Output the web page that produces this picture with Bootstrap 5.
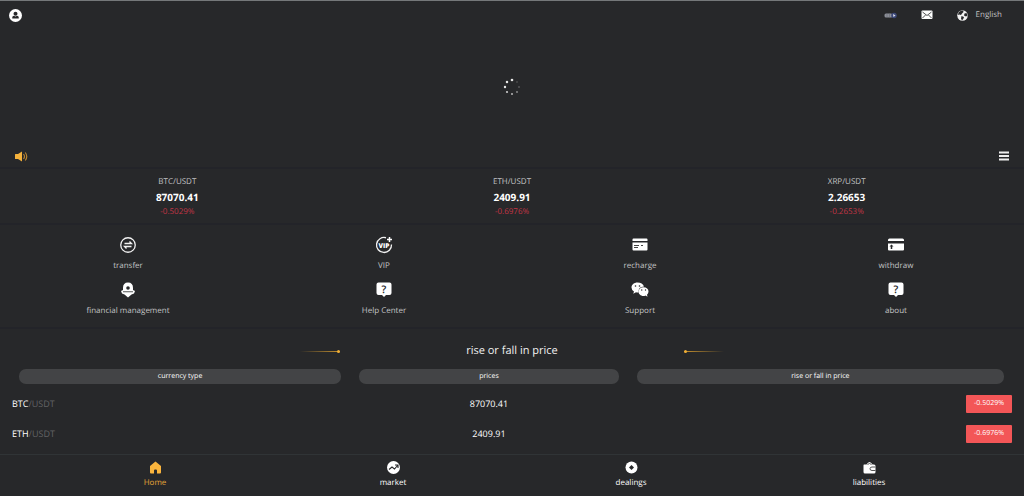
<!DOCTYPE html>
<html lang="en">
<head>
<meta charset="utf-8">
<meta name="viewport" content="width=device-width, initial-scale=1">
<title>Home</title>
<link href="https://cdn.jsdelivr.net/npm/bootstrap@5.3.0/dist/css/bootstrap.min.css" rel="stylesheet">
<style>
  body { background: #27282a; color: #c2c3c4; font-family: "Open Sans", "Noto Sans", sans-serif; font-size: 8px; line-height: 12px; text-rendering: geometricPrecision; }
  a, a:hover { color: inherit; text-decoration: none; }
  button { color: #fff; }
  svg { display: block; }
  .topbar { height: 29px; padding: 0 12px 0 9px; border-top: 1px solid #75787a; }
  .lang { padding-right: 10px; }
  .banner { height: 116px; }
  .notice { height: 22px; padding: 0 14px; }
  .rule-top { border-top: 2px solid #232429; }
  .tickers { padding: 6px 10px 4px; }
  .tickers a { line-height: 14px; }
  .quote { font-size: 10px; line-height: 16px; color: #fff; }
  .down { color: #c43546; }
  .services { padding: 11px 0 10px; row-gap: 9px; }
  .services svg { margin-bottom: 6px; }
  .heading { gap: 126px; padding: 13px 0 9px; }
  .heading h1 { font-size: 11px; line-height: 18px; color: #f0f0f0; }
  .tail { width: 40px; height: 1px; background: linear-gradient(90deg, transparent, #c8922e); }
  .tail::after { content: ""; display: block; width: 3px; height: 3px; border-radius: 50%; background: #f0ae35; margin: -1px 0 0 auto; }
  .flip { transform: rotate(180deg); }
  .prices-list { table-layout: fixed; color: #fff; }
  .prices-list th { padding: 0 9px 5px; font-weight: 400; font-size: 7px; }
  .prices-list th:first-child { padding-left: 19px; }
  .prices-list th:last-child { padding-right: 20px; }
  .prices-list th span { display: block; background: #434446; border-radius: 7px; line-height: 15px; }
  .prices-list td { height: 30px; padding: 0 12px; font-size: 9px; vertical-align: middle; }
  .c1 { width: 34.2%; } .c2 { width: 27.1%; } .c3 { width: 38.7%; }
  .unit { color: #626365; }
  .change { display: inline-block; width: 46px; line-height: 18px; font-size: 7px; background: #f35657; text-align: center; border-radius: 1px; vertical-align: middle; }
  .tabs { padding: 6px 36px 6px; border-top: 1px solid #303436; color: #fff; background: #27282a; line-height: 14px; }
  .tabs svg { margin-bottom: 2px; }
  .tabs .current { color: #e5a638; }
</style>
</head>
<body>
<div class="d-flex flex-column min-vh-100">
  <header class="topbar d-flex align-items-center justify-content-between">
    <a href="#" aria-label="Account"><svg width="13" height="13" viewBox="0 0 26 26"><circle cx="13" cy="13" r="13" fill="#fff"/><circle cx="13" cy="9.500" r="4" fill="#27282a"/><path d="M6.500 19v-2q0-3 3.500-3.500l3 1.500 3-1.500q3.500.500 3.500 3.500v2z" fill="#27282a"/></svg></a>
    <div class="d-flex align-items-center">
      <a href="#" class="me-4" aria-label="Service"><svg width="13" height="7" viewBox="0 0 26 14"><rect x="1" y="3" width="16" height="8" rx="3" fill="#8c8f98"/><path d="M6 3v8M11 3v8" stroke="#62656c"/><circle cx="20" cy="7" r="5.500" fill="#3c4878"/><path d="M18 4l5 3-4 3z" fill="#e2e4ee"/></svg></a>
      <a href="#" class="me-4" aria-label="Messages"><svg width="12" height="10" viewBox="0 0 24 20"><rect x="1" y="1" width="22" height="17" rx="2" fill="#fff"/><path d="M3 4l9 7 9-7M3 16l6-6M21 16l-6-6" fill="none" stroke="#27282a" stroke-width="1.600"/></svg></a>
      <a href="#" class="lang d-flex align-items-center"><svg class="me-2" width="11" height="11" viewBox="0 0 22 22"><circle cx="11" cy="11" r="10.500" fill="#f2f2f2"/><path d="M7 2l5-1 1 3-3 3-2 3-3-1-3 1 1-5zM15 7l4-1 2 5-3 2-4-2zM9 12l5 2-1 3-3 4-2-4z" fill="#27282a"/></svg>English</a>
    </div>
  </header>

  <section class="banner d-flex align-items-center justify-content-center" role="status" aria-label="Loading">
    <svg width="18" height="18" viewBox="0 0 36 36" fill="#e8e8e8"><circle cx="18" cy="4" r="2.600"/><circle cx="8" cy="8" r="2.500"/><circle cx="4" cy="18" r="2.400"/><circle cx="8" cy="28" r="2.200" opacity=".85"/><circle cx="18" cy="32" r="2" opacity=".75"/><circle cx="28" cy="28" r="1.800" opacity=".55"/><circle cx="32" cy="18" r="1.600" opacity=".4"/><circle cx="28" cy="8" r="1.400" opacity=".35"/></svg>
  </section>

  <div class="notice d-flex align-items-center justify-content-between">
    <svg width="14" height="11" viewBox="0 0 28 22"><path d="M3 6h5l8-5v20l-8-5H3q-1 0-1-1V7q0-1 1-1z" fill="#f5b23c"/><path d="M19 6q4 5 0 10M22.500 3q6 8 0 16" fill="none" stroke="#b98430" stroke-width="2.400"/></svg>
    <button class="border-0 bg-transparent p-0" aria-label="Menu"><svg width="12" height="10" viewBox="0 0 12 10"><path d="M1 1.500h10M1 5h10M1 8.500h10" stroke="#eee" stroke-width="2"/></svg></button>
  </div>

  <section class="tickers rule-top row g-0 text-center">
    <a href="#" class="col">BTC/USDT<div class="quote fw-bold">87070.41</div><div class="down">-0.5029%</div></a>
    <a href="#" class="col">ETH/USDT<div class="quote fw-bold">2409.91</div><div class="down">-0.6976%</div></a>
    <a href="#" class="col">XRP/USDT<div class="quote fw-bold">2.26653</div><div class="down">-0.2653%</div></a>
  </section>

  <nav class="services rule-top row row-cols-4 g-0 text-center" aria-label="Services">
    <a href="#" class="col"><svg class="mx-auto" width="18" height="18" viewBox="0 0 36 36" fill="none" stroke="#f2f2f2" stroke-width="2.600"><circle cx="18" cy="18" r="14.500"/><path d="M11 15h14l-4-4M25 21H11l4 4"/></svg>transfer</a>
    <a href="#" class="col"><svg class="mx-auto" width="18" height="18" viewBox="0 0 36 36"><path d="M22 3.500A15 15 0 1 0 33 17" fill="none" stroke="#f2f2f2" stroke-width="2.600"/><path d="M29 2v10M24 7h10" stroke="#fff" stroke-width="3"/><text x="18" y="23" text-anchor="middle" font-size="13" font-weight="800" fill="#fff">VIP</text></svg>VIP</a>
    <a href="#" class="col"><svg class="mx-auto" width="18" height="18" viewBox="0 0 36 36"><path d="M3 7q0-2 2-2h26q2 0 2 2v3H3zM3 13h30v14q0 2-2 2H5q-2 0-2-2z" fill="#fff"/><path d="M6 19h10M6 23h8M20 19h4" stroke="#444" stroke-width="2"/></svg>recharge</a>
    <a href="#" class="col"><svg class="mx-auto" width="18" height="18" viewBox="0 0 36 36"><path d="M2 8q0-3 3-3h26q3 0 3 3v2H2zM2 15h32v12q0 2-2 2H4q-2 0-2-2z" fill="#fff"/><path d="M9 17l4 4h-2.500v5h-3v-5H5z" fill="#27282a"/></svg>withdraw</a>
    <a href="#" class="col"><svg class="mx-auto" width="18" height="18" viewBox="0 0 36 36"><path d="M8 18V14Q8 3 18 3T28 14V18L32 20 30 25 25 27 18 33 11 27 6 25 4 20z" fill="#fff"/><circle cx="18" cy="14" r="3.600" fill="#27282a"/><path d="M8 21.500h20" stroke="#27282a" stroke-width="1.600"/></svg>financial management</a>
    <a href="#" class="col"><svg class="mx-auto" width="18" height="18" viewBox="0 0 36 36"><path d="M7 3h22q4 0 4 4v17q0 4-4 4h-7l-4 4-4-4H7q-4 0-4-4V7q0-4 4-4z" fill="#fff"/><text x="18" y="23" text-anchor="middle" font-size="21" font-weight="600" fill="#27282a">?</text></svg>Help Center</a>
    <a href="#" class="col"><svg class="mx-auto" width="18" height="18" viewBox="0 0 36 36" fill="#fff"><path d="M13 3C6 3 1 7.500 1 13q0 5 5 8l-1.500 4.500L10 22.500q3 1 5 .5Q14 11 26 11 23 3 13 3z"/><path d="M25 12.500c-6 0-10 4-10 8.500s4 9 10 9q2 0 4-1l4 2.500-1-4q3-2.500 3-6.500c0-5-4-8.500-10-8.500z"/><g fill="#27282a"><circle cx="9" cy="10" r="1.600"/><circle cx="17" cy="10" r="1.600"/><circle cx="21.500" cy="18" r="1.400"/><circle cx="29" cy="18" r="1.400"/></g></svg>Support</a>
    <a href="#" class="col"><svg class="mx-auto" width="18" height="18" viewBox="0 0 36 36"><path d="M7 3h22q4 0 4 4v17q0 4-4 4h-7l-4 4-4-4H7q-4 0-4-4V7q0-4 4-4z" fill="#fff"/><text x="18" y="23" text-anchor="middle" font-size="21" font-weight="600" fill="#27282a">?</text></svg>about</a>
  </nav>

  <section class="rule-top">
    <div class="heading d-flex align-items-center justify-content-center">
      <span class="tail"></span><h1 class="m-0 fw-normal">rise or fall in price</h1><span class="tail flip"></span>
    </div>
    <table class="prices-list w-100 text-center">
      <colgroup><col class="c1"><col class="c2"><col class="c3"></colgroup>
      <thead><tr><th><span>currency type</span></th><th><span>prices</span></th><th><span>rise or fall in price</span></th></tr></thead>
      <tbody>
        <tr><td class="text-start">BTC<span class="unit">/USDT</span></td><td>87070.41</td><td class="text-end"><span class="change">-0.5029%</span></td></tr>
        <tr><td class="text-start">ETH<span class="unit">/USDT</span></td><td>2409.91</td><td class="text-end"><span class="change">-0.6976%</span></td></tr>
      </tbody>
    </table>
  </section>

  <nav class="tabs row row-cols-4 g-0 text-center mt-auto" aria-label="Main">
    <a href="#" class="col current" aria-current="page"><svg class="mx-auto" width="13" height="13" viewBox="0 0 26 26"><path d="M13 1l11 9v13q0 2-2 2h-6v-6q0-2-2-2h-2q-2 0-2 2v6H4q-2 0-2-2V10z" fill="#fbb53d"/></svg>Home</a>
    <a href="#" class="col"><svg class="mx-auto" width="13" height="13" viewBox="0 0 26 26"><circle cx="13" cy="13" r="13" fill="#fff"/><path d="M4 17l6-5 5 4 6-7M16 8h6v6" fill="none" stroke="#27282a" stroke-width="2.200"/></svg>market</a>
    <a href="#" class="col"><svg class="mx-auto" width="13" height="13" viewBox="0 0 26 26"><circle cx="13" cy="13" r="12" fill="#fff"/><path d="M13 8l5 5-5 5-5-5z" fill="#27282a"/></svg>dealings</a>
    <a href="#" class="col"><svg class="mx-auto" width="13" height="13" viewBox="0 0 26 26"><path d="M2 7h5q6-10 12 0h3q3 0 3 3v12q0 3-3 3H4q-3 0-3-3V9q0-2 1-2z" fill="#fff"/><path d="M9 7q4-4 8 0M25 12h-7q-4 0-4 3.500t4 3.500h7" fill="none" stroke="#555" stroke-width="2"/></svg>liabilities</a>
  </nav>
</div>
<script src="https://cdn.jsdelivr.net/npm/bootstrap@5.3.0/dist/js/bootstrap.bundle.min.js"></script>
</body>
</html>
